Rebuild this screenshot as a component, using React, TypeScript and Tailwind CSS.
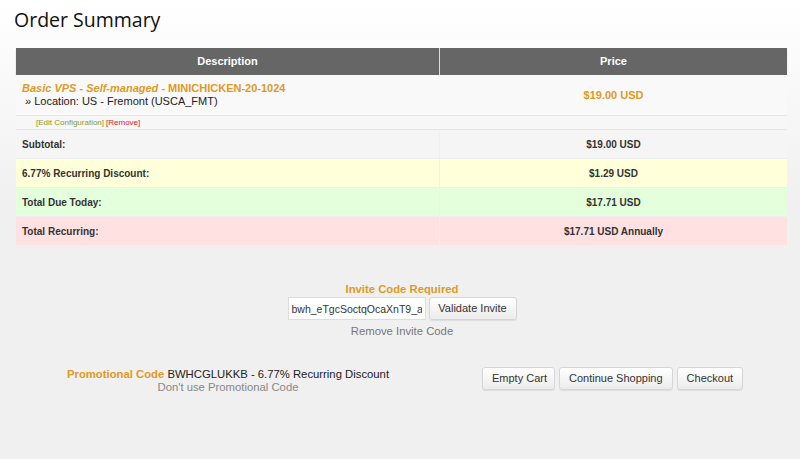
import React from 'react';

const rows = [
  { label: 'Subtotal:', value: '$19.00 USD', bg: 'bg-[#f5f5f5]' },
  { label: '6.77% Recurring Discount:', value: '$1.29 USD', bg: 'bg-[#ffffd9]' },
  { label: 'Total Due Today:', value: '$17.71 USD', bg: 'bg-[#e4ffdc]' },
  { label: 'Total Recurring:', value: '$17.71 USD Annually', bg: 'bg-[#ffe1e1]' },
];

const btnBase =
  'whitespace-nowrap rounded-[3px] border border-[#d6d6d6] bg-gradient-to-b from-white to-[#ececec] h-[23px] text-[11px] text-[#333] shadow-[0_1px_1px_rgba(0,0,0,0.08)]';
const btn = `${btnBase} px-[9px]`;

export default function App() {
  return (
    <div className="min-h-[459px] bg-linear-to-b from-white to-[#f0f0f0] to-45% font-['Liberation_Sans',Arial,sans-serif]">
      <h1 className="px-[14px] pt-[5px] font-['Open_Sans',sans-serif] text-[19.5px] leading-[30px] text-[#111]">
        Order Summary
      </h1>

      <div className="mx-[16px] mt-[13px] w-[771px]">
        <div className="flex h-[27px] bg-[#666] text-[11px] font-bold text-white shadow-[0_1px_1px_rgba(0,0,0,0.25)]">
          <div className="flex w-[424px] items-center justify-center border-r border-[#ddd]">Description</div>
          <div className="flex flex-1 items-center justify-center">Price</div>
        </div>

        <div className="flex border-b border-[#e6e6e6] bg-[#f9f9f9]">
          <div className="w-[424px] px-[6px] pt-[7px] pb-[7px] text-[11px] leading-[13px]">
            <div className="font-bold text-[#e09a1e]">
              <i>Basic VPS - Self-managed</i> - MINICHICKEN-20-1024
            </div>
            <div className="text-[#222]">&nbsp;» Location: US - Fremont (USCA_FMT)</div>
          </div>
          <div className="flex flex-1 items-center justify-center text-[11px] font-bold text-[#e09a1e]">
            $19.00 USD
          </div>
        </div>
        <div className="flex h-[14px] items-center border-b border-[#e6e6e6] bg-[#f7f7f7] pl-[20px] text-[8px]">
          <span className="text-[#8c9a2c]">[Edit Configuration]</span>
          <span className="ml-[2px] text-[#d22]">[Remove]</span>
        </div>

        {rows.map((r) => (
          <div key={r.label} className={`flex h-[29px] border-b border-[#eee] text-[10px] font-bold text-[#333] ${r.bg}`}>
            <div className="flex w-[424px] items-center border-r border-[#f0f0f0] px-[6px]">{r.label}</div>
            <div className="flex flex-1 items-center justify-center">{r.value}</div>
          </div>
        ))}
      </div>

      <div className="mt-[37px] flex flex-col items-center pl-[4px]">
        <div className="text-[11.3px] font-bold leading-[13px] text-[#e09a1e]">Invite Code Required</div>
        <div className="mt-[1px] flex gap-[3px]">
          <input
            readOnly
            value="bwh_eTgcSoctqOcaXnT9_a"
            className="h-[23px] w-[138px] border border-[#ddd] bg-white px-[3px] text-[10.5px] text-[#333] outline-none"
          />
          <button className={`${btnBase} w-[88px]`}>Validate Invite</button>
        </div>
        <div className="mt-[3px] text-[11.3px] text-[#777]">Remove Invite Code</div>
      </div>

      <div className="mt-[27px] flex items-start">
        <div className="ml-[67px] mt-[1px] flex w-[322px] flex-col items-center text-[11.3px] leading-[13px]">
          <div className="whitespace-nowrap text-[#222]">
            <span className="font-bold text-[#e09a1e]">Promotional Code</span> BWHCGLUKKB - 6.77% Recurring Discount
          </div>
          <div className="text-[#888]">Don't use Promotional Code</div>
        </div>
        <div className="ml-[93px] flex gap-[4px]">
          <button className={`${btn} w-[73px] px-0`}>Empty Cart</button>
          <button className={btn}>Continue Shopping</button>
          <button className={btn}>Checkout</button>
        </div>
      </div>
    </div>
  );
}
